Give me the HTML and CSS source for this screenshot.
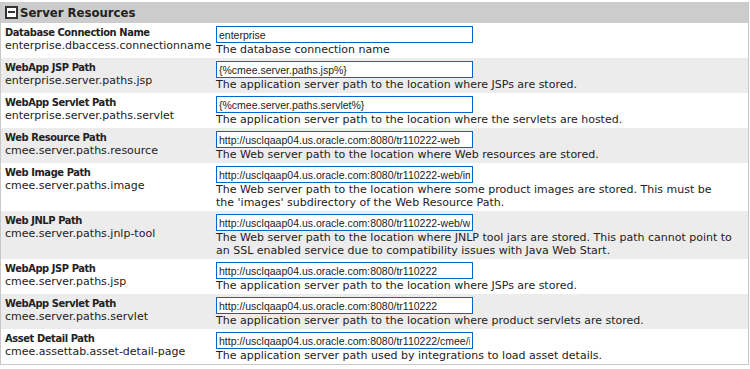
FILE: index.html
```html
<!DOCTYPE html>
<html lang="en">
<head>
    <meta charset="UTF-8">
    <title>Server Resources</title>
    <link rel="stylesheet" href="styles.css">
</head>
<body>
    <div class="panel">
        <div class="panel-head"><span class="toggle"></span>Server Resources</div>

        <div class="row">
            <div class="label"><b>Database Connection Name</b><span>enterprise.dbaccess.connectionname</span></div>
            <div class="field">
                <input type="text" value="enterprise">
                <div class="desc">The database connection name</div>
            </div>
        </div>
        <div class="row alt">
            <div class="label"><b>WebApp JSP Path</b><span>enterprise.server.paths.jsp</span></div>
            <div class="field">
                <input type="text" value="{%cmee.server.paths.jsp%}">
                <div class="desc">The application server path to the location where JSPs are stored.</div>
            </div>
        </div>
        <div class="row">
            <div class="label"><b>WebApp Servlet Path</b><span>enterprise.server.paths.servlet</span></div>
            <div class="field">
                <input type="text" value="{%cmee.server.paths.servlet%}">
                <div class="desc">The application server path to the location where the servlets are hosted.</div>
            </div>
        </div>
        <div class="row alt">
            <div class="label"><b>Web Resource Path</b><span>cmee.server.paths.resource</span></div>
            <div class="field">
                <input type="text" value="http://usclqaap04.us.oracle.com:8080/tr110222-web">
                <div class="desc">The Web server path to the location where Web resources are stored.</div>
            </div>
        </div>
        <div class="row">
            <div class="label"><b>Web Image Path</b><span>cmee.server.paths.image</span></div>
            <div class="field">
                <input type="text" value="http://usclqaap04.us.oracle.com:8080/tr110222-web/images">
                <div class="desc">The Web server path to the location where some product images are stored. This must be<br>the 'images' subdirectory of the Web Resource Path.</div>
            </div>
        </div>
        <div class="row alt">
            <div class="label"><b>Web JNLP Path</b><span>cmee.server.paths.jnlp-tool</span></div>
            <div class="field">
                <input type="text" value="http://usclqaap04.us.oracle.com:8080/tr110222-web/webstart">
                <div class="desc">The Web server path to the location where JNLP tool jars are stored. This path cannot point to<br>an SSL enabled service due to compatibility issues with Java Web Start.</div>
            </div>
        </div>
        <div class="row">
            <div class="label"><b>WebApp JSP Path</b><span>cmee.server.paths.jsp</span></div>
            <div class="field">
                <input type="text" value="http://usclqaap04.us.oracle.com:8080/tr110222">
                <div class="desc">The application server path to the location where JSPs are stored.</div>
            </div>
        </div>
        <div class="row alt">
            <div class="label"><b>WebApp Servlet Path</b><span>cmee.server.paths.servlet</span></div>
            <div class="field">
                <input type="text" value="http://usclqaap04.us.oracle.com:8080/tr110222">
                <div class="desc">The application server path to the location where product servlets are stored.</div>
            </div>
        </div>
        <div class="row">
            <div class="label"><b>Asset Detail Path</b><span>cmee.assettab.asset-detail-page</span></div>
            <div class="field">
                <input type="text" value="http://usclqaap04.us.oracle.com:8080/tr110222/cmee/index.jsp">
                <div class="desc">The application server path used by integrations to load asset details.</div>
            </div>
        </div>
    </div>
</body>
</html>
```

FILE: styles.css
```css
body { margin: 0; padding-top: 2px; background: #fff; font-family: "DejaVu Sans", Verdana, sans-serif; font-size: 11px; color: #222; }
.panel { width: 747px; border: 1px solid #c8c8c8; border-top: none; }
.panel-head { display: flex; align-items: center; height: 21px; background: #cccccc; font-family: "DejaVu Sans Condensed", "DejaVu Sans", sans-serif; font-size: 13px; font-weight: bold; color: #222; }
.toggle { width: 9px; height: 9px; border: 2px solid #333; margin: 0 2px 0 4px; position: relative; background: #fff; }
.toggle::after { content: ""; position: absolute; left: 1px; right: 1px; top: 3px; height: 2px; background: #333; }
.row { display: flex; padding: 3px 0 2px; background: #fff; }
.row.alt { background: #ececec; }
.label { width: 211px; padding-left: 4px; line-height: 13px; }
.label b { display: block; font-family: "DejaVu Sans Condensed", "DejaVu Sans", sans-serif; letter-spacing: -0.4px; }
.label span { display: block; }
.field { flex: 1; padding-right: 4px; white-space: nowrap; }
.field input { display: block; box-sizing: border-box; width: 257px; height: 17px; margin: 0; padding: 0 2px; border: 1px solid #0066cc; font-family: "Liberation Sans", Arial, sans-serif; font-size: 10.5px; color: #222; background: #fff; outline: none; }
.desc { line-height: 13px; }
```
